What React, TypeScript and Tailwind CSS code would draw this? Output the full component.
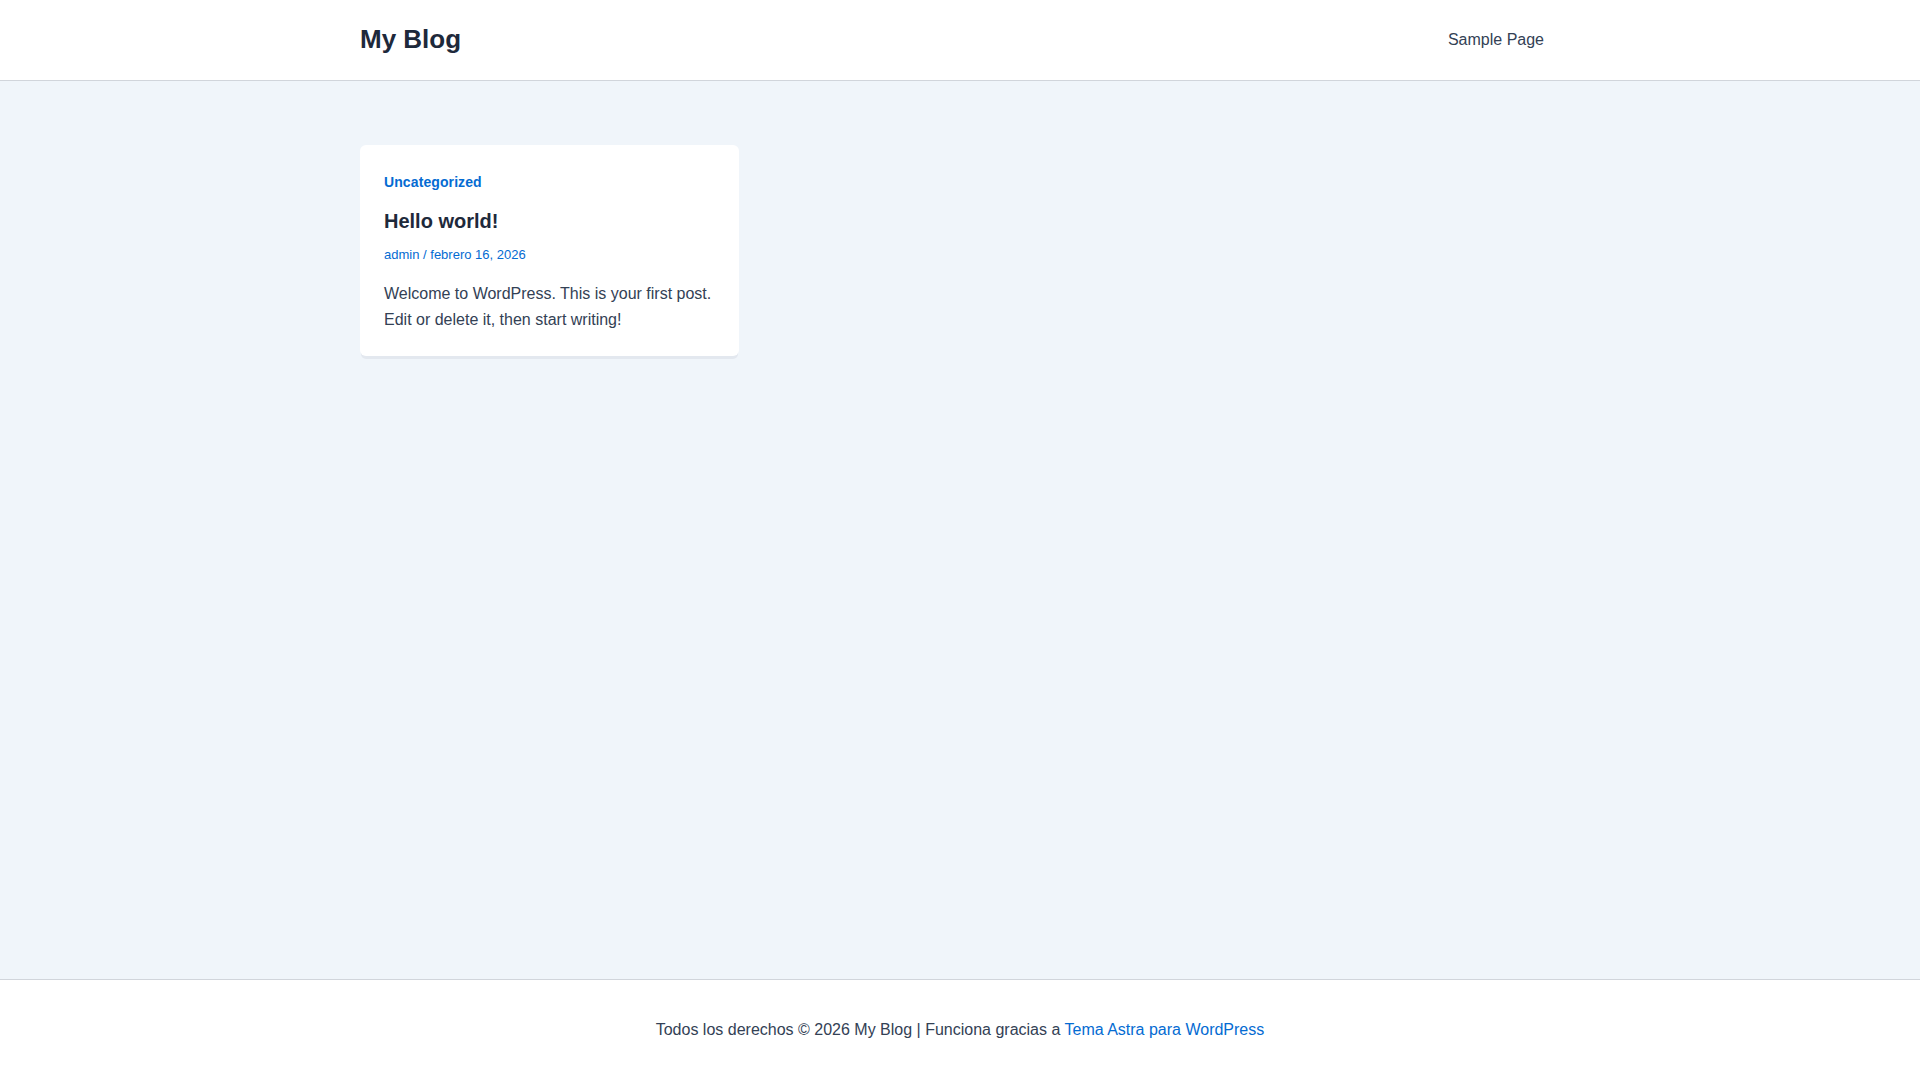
export default function App() {
  return (
    <div className="min-h-screen flex flex-col bg-[#f0f5fa] font-['Liberation_Sans',Arial,sans-serif] text-[#334155]">
      {/* Header */}
      <header className="h-[81px] bg-white border-b border-[#d1d5db]">
        <div className="mx-auto w-[1200px] h-full flex items-center justify-between">
          <a href="#" className="text-[26px] font-bold text-[#1e293b] leading-none -mt-[2px]">
            My Blog
          </a>
          <nav className="flex items-center">
            <a href="#" className="px-4 text-[16px] text-[#334155] leading-none">
              Sample Page
            </a>
          </nav>
        </div>
      </header>

      {/* Posts */}
      <main className="flex-1 pt-16">
        <div className="mx-auto w-[1200px]">
          <article className="w-[379px] bg-white rounded-md px-6 pt-6 pb-[23px] shadow-[0_4px_0_-1px_#e3e8ef]">
            <a href="#" className="block text-[14px] leading-[26px] font-bold text-[#046bd2] tracking-[0.1px]">
              Uncategorized
            </a>
            <h2 className="mt-[13px] text-[20px] leading-[26px] font-bold text-[#1e293b]">
              Hello world!
            </h2>
            <div className="mt-[11px] text-[13px] leading-[20px] text-[#046bd2]">
              <a href="#">admin</a> / <span>febrero 16, 2026</span>
            </div>
            <p className="mt-4 text-[16px] leading-[26px] text-[#334155]">
              Welcome to WordPress. This is your first post. Edit or delete it, then start writing!
            </p>
          </article>
        </div>
      </main>

      {/* Footer */}
      <footer className="h-[101px] bg-white border-t border-[#d1d5db] flex items-center justify-center">
        <p className="text-[16px] text-[#334155]">
          Todos los derechos © 2026 My Blog | Funciona gracias a{' '}
          <a href="#" className="text-[#046bd2]">Tema Astra para WordPress</a>
        </p>
      </footer>
    </div>
  );
}
